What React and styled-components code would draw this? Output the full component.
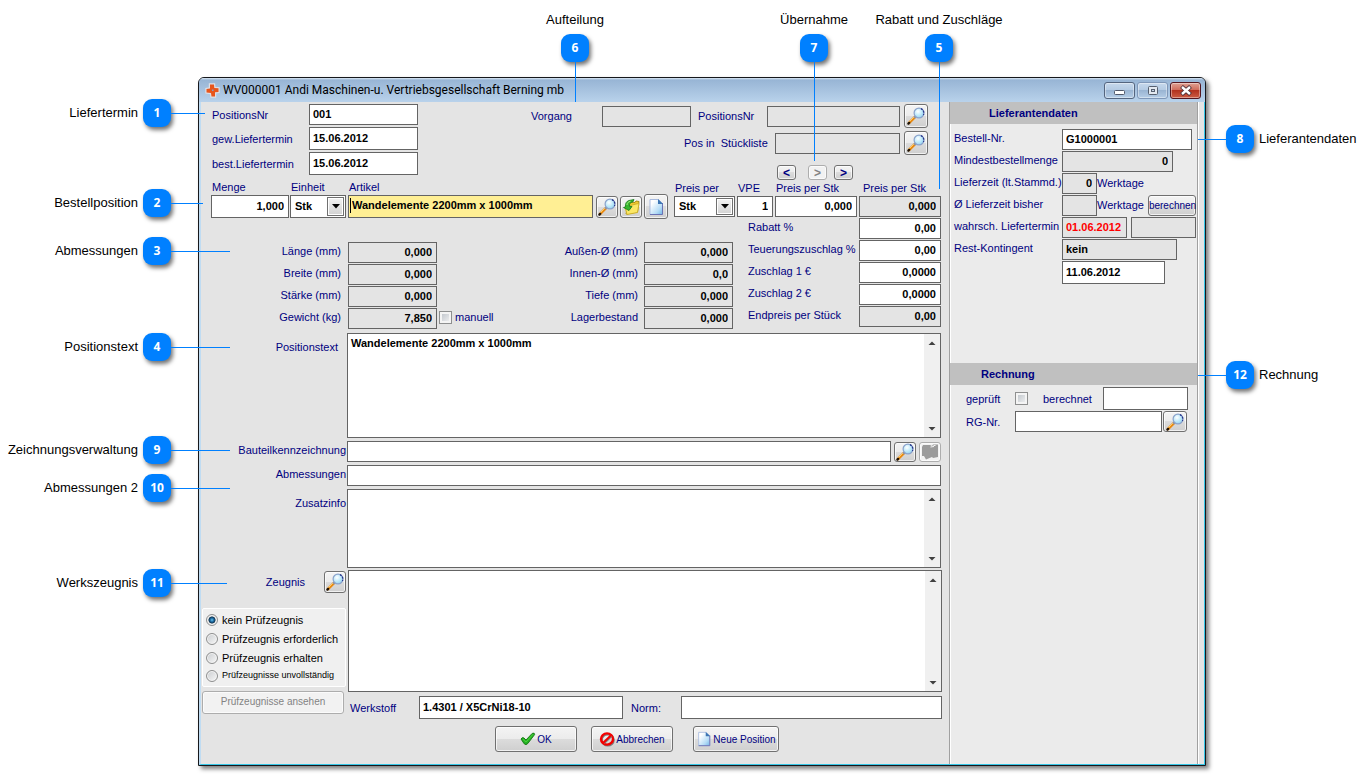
import React, { useId } from 'react';
import styled, { createGlobalStyle, css } from 'styled-components';

const GlobalStyle = createGlobalStyle`
  * {
    box-sizing: border-box;
  }

  body {
    margin: 0;
    background: #fff;
    font-family: "Liberation Sans", Arial, sans-serif;
    font-size: 11px;
    color: #000;
  }

  input, select, textarea, button {
    font-family: inherit;
  }
`;

const callouts = [
  { no: 1, text: 'Liefertermin', side: 'left', at: 113, line: 34 },
  { no: 2, text: 'Bestellposition', side: 'left', at: 203, line: 32 },
  { no: 3, text: 'Abmessungen', side: 'left', at: 251, line: 59 },
  { no: 4, text: 'Positionstext', side: 'left', at: 347, line: 59 },
  { no: 9, text: 'Zeichnungsverwaltung', side: 'left', at: 450, line: 59 },
  { no: 10, text: 'Abmessungen 2', side: 'left', at: 488, line: 59 },
  { no: 11, text: 'Werkszeugnis', side: 'left', at: 583, line: 56 },
  { no: 6, text: 'Aufteilung', side: 'top', at: 575, line: 40 },
  { no: 7, text: 'Übernahme', side: 'top', at: 814, line: 99 },
  { no: 5, text: 'Rabatt und Zuschläge', side: 'top', at: 939, line: 127 },
  { no: 8, text: 'Lieferantendaten', side: 'right', at: 139, line: 28 },
  { no: 12, text: 'Rechnung', side: 'right', at: 375, line: 28 },
];

const MagnifierIcon = () => {
  const id = useId();
  return (
    <svg width="18" height="18" viewBox="0 0 18 18" aria-hidden="true">
      <defs>
        <radialGradient id={id} cx="0.4" cy="0.35" r="0.7">
          <stop offset="0" stopColor="#ffffff" />
          <stop offset="0.5" stopColor="#c4ecfb" />
          <stop offset="1" stopColor="#8fd0f0" />
        </radialGradient>
      </defs>
      <path d="M2 16 L8 10" stroke="#e98a12" strokeWidth="2.6" strokeLinecap="round" />
      <path d="M2.5 14.5 L7 10" stroke="#ffcf6b" strokeWidth="1" />
      <path d="M1.4 16.6 L2.2 15.8" stroke="#1c1208" strokeWidth="2.2" strokeLinecap="round" />
      <path d="M7.2 10.8 L8.8 9.2" stroke="#8b94a8" strokeWidth="2.2" />
      <circle cx="12" cy="6" r="4.9" fill={`url(#${id})`} stroke="#8ba3cc" strokeWidth="1.2" />
      <path d="M14 1.6 A4.9 4.9 0 0 1 16.4 8" fill="none" stroke="#27358c" strokeWidth="1.2" strokeDasharray="2 1" />
    </svg>
  );
};

const PageIcon = ({ size = 18 }) => {
  const id = useId();
  return (
    <svg width={size} height={size} viewBox="0 0 18 18" aria-hidden="true">
      <defs>
        <linearGradient id={id} x1="0" y1="0" x2="1" y2="1">
          <stop offset="0.2" stopColor="#ffffff" />
          <stop offset="0.7" stopColor="#b5dcf6" />
          <stop offset="1" stopColor="#6fb4e6" />
        </linearGradient>
      </defs>
      <path d="M3 1.5 H11.5 L15.5 5.5 V16.5 H3 Z" fill={`url(#${id})`} stroke="#a9bbdf" />
      <path d="M15.5 5 V16.5 H3" fill="none" stroke="#6a72b4" />
      <path d="M11 1 L16 6 H11 Z" fill="#3d76b4" />
    </svg>
  );
};

const FolderIcon = () => (
  <svg width="18" height="18" viewBox="0 0 18 18" aria-hidden="true">
    <path d="M7 4 L13 4.5 L14 3 L17 3.5 L15.5 14 L4 16 Z" fill="#f3c92c" stroke="#a88a14" />
    <path d="M3 9 L14 6 L17 5.5 L15.5 14.5 L5 16.5 Z" fill="#fbe766" stroke="#cdb02a" />
    <path d="M7 2.5 L12 1.5 L11 3.8 C8 4.5 7 6 7.5 8.5 L10 8.5 L7 12.5 L1.5 9.5 L3.5 8.8 C3 5.5 4.5 3.2 7 2.5 Z" fill="#35b72e" stroke="#15761a" strokeWidth="0.8" />
    <path d="M5 7 C5 5 6.2 3.8 8.5 3.2" fill="none" stroke="#a7ec82" />
  </svg>
);

const GreyFolderIcon = () => (
  <svg width="18" height="16" viewBox="0 0 18 16" aria-hidden="true">
    <path d="M2 1 H9 L11 2 L12 0.5 H17 V13 L12 14 L11 13 L5 15.5 L3 12 H1 V3 Z" fill="#9b9b9b" />
    <path d="M9.5 3 L13 2.5 M12.5 1.5 H14.5" stroke="#f4f4f4" />
  </svg>
);

const CheckIcon = () => (
  <svg width="16" height="14" viewBox="0 0 16 14" aria-hidden="true">
    <path d="M1 7 Q2.5 4.8 4 6 L6 8 L12.2 1.4 Q14.8 0.4 14.6 2.6 L7.8 11.5 Q6 13.6 4.2 11.8 Z" fill="#24b324" stroke="#12740f" strokeWidth="0.9" />
    <path d="M3 7.3 L6 10 L13 2.3" fill="none" stroke="#4fd03c" />
  </svg>
);

const ForbiddenIcon = () => (
  <svg width="16" height="16" viewBox="0 0 16 16" aria-hidden="true">
    <ellipse cx="8.8" cy="9" rx="6" ry="5.5" fill="none" stroke="#7d7d7d" strokeWidth="2" />
    <ellipse cx="8" cy="8" rx="6" ry="5.6" fill="none" stroke="#f40000" strokeWidth="2.4" />
    <path d="M5.2 12.4 L12.6 5.4" stroke="#7d7d7d" strokeWidth="1.5" />
    <path d="M4 12 L12 4.2" stroke="#f40000" strokeWidth="2" />
  </svg>
);

const AppIcon = () => (
  <svg width="15" height="15" viewBox="0 0 15 15" aria-hidden="true">
    <path d="M5 1.5 H9 L9.3 5 L13.5 5.3 V9 L10 9.3 V13.5 H6.5 L6 10 L1.5 9.5 V6 L5 5.5 Z" fill="#e8561c" stroke="#dfdfe4" strokeWidth="2.4" />
    <path d="M5 1.5 H9 L9.3 5 L13.5 5.3 V9 L10 9.3 V13.5 H6.5 L6 10 L1.5 9.5 V6 L5 5.5 Z" fill="#e8561c" />
    <rect x="7" y="6.5" width="1.5" height="1.5" fill="#7fa3cf" />
  </svg>
);

const MinimizeIcon = () => (
  <svg width="12" height="11" viewBox="0 0 12 11" aria-hidden="true">
    <rect x="0.5" y="5.5" width="10" height="4" rx="1" fill="#fff" stroke="#50586a" />
  </svg>
);

const MaximizeIcon = () => (
  <svg width="12" height="11" viewBox="0 0 12 11" aria-hidden="true">
    <rect x="1.5" y="1.5" width="9" height="8" rx="1" fill="#e3e9f0" stroke="#566070" />
    <rect x="4.5" y="4.5" width="3" height="2" fill="#c5d4e5" stroke="#566070" />
  </svg>
);

const CloseIcon = () => (
  <svg width="12" height="11" viewBox="0 0 12 11" aria-hidden="true">
    <path d="M1.5 1.5 L10.5 9.5 M10.5 1.5 L1.5 9.5" stroke="#4b2f38" strokeWidth="4.2" />
    <path d="M2 2 L10 9 M10 2 L2 9" stroke="#fff" strokeWidth="2.4" />
  </svg>
);

const Callout = ({ no, text, side, at, line }) => (
  <Pin $side={side} $at={at}>
    <span>{text}</span>
    <Badge>{no}</Badge>
    <Pointer $side={side} $length={line} />
  </Pin>
);

const Lookup = ({ label, $w = 22, $h = 22 }) => (
  <IconButton type="button" aria-label={label} $w={$w} $h={$h}>
    <MagnifierIcon />
  </IconButton>
);

const Combo = ({ id, height }) => (
  <ComboBox $h={height}>
    <Select id={id} defaultValue="Stk">
      <option>Stk</option>
    </Select>
    <ComboArrow>
      <svg width="8" height="5" viewBox="0 0 8 5" aria-hidden="true">
        <path d="M0 0 H8 L4 4.5 Z" fill="#000" />
      </svg>
    </ComboArrow>
  </ComboBox>
);

const Memo = ({ id, height, value }) => (
  <MemoBox $h={height}>
    <TextArea id={id} defaultValue={value} />
    <ScrollTrack>
      <ScrollButton type="button" aria-label="nach oben">
        <svg width="8" height="4" viewBox="0 0 8 4" aria-hidden="true">
          <path d="M0.5 4 L4 0.5 L7.5 4 Z" fill="#404040" />
        </svg>
      </ScrollButton>
      <ScrollButton type="button" aria-label="nach unten">
        <svg width="8" height="4" viewBox="0 0 8 4" aria-hidden="true">
          <path d="M0.5 0 L4 3.5 L7.5 0 Z" fill="#404040" />
        </svg>
      </ScrollButton>
    </ScrollTrack>
  </MemoBox>
);

const HeaderSection = () => (
  <Top>
    <Dates>
      <Label htmlFor="posnr">PositionsNr</Label>
      <Field id="posnr" defaultValue="001" />
      <Label htmlFor="gew">gew.Liefertermin</Label>
      <Field id="gew" $h={23} defaultValue="15.06.2012" />
      <Label htmlFor="best">best.Liefertermin</Label>
      <Field id="best" $h={23} defaultValue="15.06.2012" />
    </Dates>
    <Split>
      <SplitRow>
        <Label htmlFor="vorgang" $w={71}>Vorgang</Label>
        <Field id="vorgang" $w={89} $grey readOnly />
        <SplitLabel htmlFor="splitpos" $w={69}>PositionsNr</SplitLabel>
        <Field id="splitpos" $w={133} $grey readOnly />
        <LookupSlot>
          <Lookup label="Position suchen" $w={24} $h={24} />
        </LookupSlot>
      </SplitRow>
      <SplitRow>
        <PreLabel htmlFor="stueckliste" $w={91}>{'Pos in  Stückliste'}</PreLabel>
        <Field id="stueckliste" $w={125} $grey readOnly />
        <LookupSlot>
          <Lookup label="Stückliste suchen" $w={24} $h={24} />
        </LookupSlot>
      </SplitRow>
      <Arrows>
        <ArrowButton type="button">&lt;</ArrowButton>
        <ArrowPair>
          <ArrowButton type="button" disabled>&gt;</ArrowButton>
          <ArrowButton type="button">&gt;</ArrowButton>
        </ArrowPair>
      </Arrows>
    </Split>
  </Top>
);

const ArticleSection = () => (
  <Article>
    <Cell $w={78}>
      <Label htmlFor="menge">Menge</Label>
      <Field id="menge" $h={23} $right defaultValue="1,000" />
    </Cell>
    <Cell $w={56}>
      <Label htmlFor="einheit">Einheit</Label>
      <Combo id="einheit" height={23} />
    </Cell>
    <Cell $grow>
      <Label htmlFor="artikel">Artikel</Label>
      <ActiveField id="artikel" $h={23} defaultValue="Wandelemente 2200mm x 1000mm" />
    </Cell>
    <ArticleTools>
      <Lookup label="Artikel suchen" />
      <IconButton type="button" aria-label="Artikel übernehmen"><FolderIcon /></IconButton>
      <IconButton type="button" aria-label="Neuer Artikel" $w={24} $h={25}><PageIcon /></IconButton>
    </ArticleTools>
    <Prices>
      <Cell $w={61}>
        <Label htmlFor="preisper">Preis per</Label>
        <Combo id="preisper" height={21} />
      </Cell>
      <Cell $w={36}>
        <Label htmlFor="vpe">VPE</Label>
        <Field id="vpe" $right defaultValue="1" />
      </Cell>
      <Cell $w={82}>
        <Label htmlFor="preis">Preis per Stk</Label>
        <Field id="preis" $right defaultValue="0,000" />
      </Cell>
      <Cell $w={82}>
        <PriceLabel htmlFor="preis2">Preis per Stk</PriceLabel>
        <Field id="preis2" $right $grey readOnly defaultValue="0,000" />
      </Cell>
    </Prices>
  </Article>
);

const dimensions = [
  ['laenge', 'Länge (mm)', '0,000'],
  ['breite', 'Breite (mm)', '0,000'],
  ['staerke', 'Stärke (mm)', '0,000'],
  ['gewicht', 'Gewicht (kg)', '7,850'],
];

const diameters = [
  ['aussen', 'Außen-Ø (mm)', '0,000'],
  ['innen', 'Innen-Ø (mm)', '0,0'],
  ['tiefe', 'Tiefe (mm)', '0,000'],
  ['lager', 'Lagerbestand', '0,000'],
];

const surcharges = [
  ['rabatt', 'Rabatt %', '0,00'],
  ['teuerung', 'Teuerungszuschlag %', '0,00'],
  ['zuschlag1', 'Zuschlag 1 €', '0,0000'],
  ['zuschlag2', 'Zuschlag 2 €', '0,0000'],
  ['endpreis', 'Endpreis per Stück', '0,00'],
];

const DetailSection = () => (
  <Details>
    <Measures>
      <MeasureGrid $label={140} $gap={7}>
        {dimensions.map(([id, label, value]) => (
          <React.Fragment key={id}>
            <RightLabel htmlFor={id}>{label}</RightLabel>
            <Field id={id} $right $grey readOnly defaultValue={value} />
          </React.Fragment>
        ))}
      </MeasureGrid>
      <Manual>
        <CheckBox id="manuell" type="checkbox" />
        <Label htmlFor="manuell">manuell</Label>
      </Manual>
      <MeasureGrid $label={90} $gap={6}>
        {diameters.map(([id, label, value]) => (
          <React.Fragment key={id}>
            <RightLabel htmlFor={id}>{label}</RightLabel>
            <Field id={id} $right $grey readOnly defaultValue={value} />
          </React.Fragment>
        ))}
      </MeasureGrid>
    </Measures>
    <Surcharges>
      {surcharges.map(([id, label, value]) => (
        <React.Fragment key={id}>
          <Label htmlFor={id}>{label}</Label>
          <Field id={id} $right $grey={id === 'endpreis'} defaultValue={value} />
        </React.Fragment>
      ))}
    </Surcharges>
  </Details>
);

const TextSection = () => (
  <TextRows>
    <PositionLabel htmlFor="postext">Positionstext</PositionLabel>
    <Memo id="postext" height={105} value="Wandelemente 2200mm x 1000mm" />
    <RightLabel htmlFor="bauteil">Bauteilkennzeichnung</RightLabel>
    <FieldLine>
      <Field id="bauteil" $grow />
      <Lookup label="Zeichnung suchen" $h={20} />
      <IconButton type="button" aria-label="Zeichnung öffnen" $h={20} disabled>
        <GreyFolderIcon />
      </IconButton>
    </FieldLine>
    <RightLabel htmlFor="abm">Abmessungen</RightLabel>
    <Field id="abm" />
    <MemoLabel htmlFor="zusatz">Zusatzinfo</MemoLabel>
    <Memo id="zusatz" height={79} />
  </TextRows>
);

const certificates = [
  ['kein', 'kein Prüfzeugnis'],
  ['erforderlich', 'Prüfzeugnis erforderlich'],
  ['erhalten', 'Prüfzeugnis erhalten'],
  ['unvollstaendig', 'Prüfzeugnisse unvollständig'],
];

const CertificateSection = () => (
  <Certificate>
    <Aside>
      <CertificateHead>
        <Label htmlFor="zeugnis">Zeugnis</Label>
        <Lookup label="Zeugnis suchen" />
      </CertificateHead>
      <RadioPanel>
        {certificates.map(([id, label], i) => (
          <RadioLabel key={id} $small={i === 3}>
            <Radio type="radio" name="pruefzeugnis" defaultChecked={i === 0} />
            {label}
          </RadioLabel>
        ))}
      </RadioPanel>
      <ShowButton type="button" disabled>Prüfzeugnisse ansehen</ShowButton>
    </Aside>
    <CertificateMain>
      <Memo id="zeugnis" height={122} />
      <MaterialRow>
        <Label htmlFor="werkstoff" $w={69}>Werkstoff</Label>
        <Field id="werkstoff" $h={23} $w={204} defaultValue="1.4301 / X5CrNi18-10" />
        <NormLabel htmlFor="norm" $w={50}>Norm:</NormLabel>
        <Field id="norm" $h={23} $grow />
      </MaterialRow>
      <Actions>
        <ActionButton type="button" $w={82}><CheckIcon />OK</ActionButton>
        <ActionButton type="button" $w={82}><ForbiddenIcon />Abbrechen</ActionButton>
        <NewButton type="button" $w={86}><PageIcon size={16} />Neue Position</NewButton>
      </Actions>
    </CertificateMain>
  </Certificate>
);

const SupplierPanel = () => (
  <Side>
    <PanelTitle>Lieferantendaten</PanelTitle>
    <SupplierRows>
      <Label htmlFor="bestellnr">Bestell-Nr.</Label>
      <SideLine><Field id="bestellnr" $w={130} defaultValue="G1000001" /></SideLine>
      <Label htmlFor="mindest">Mindestbestellmenge</Label>
      <SideLine><Field id="mindest" $w={111} $right $grey readOnly defaultValue="0" /></SideLine>
      <Label htmlFor="lieferzeit">Lieferzeit (lt.Stammd.)</Label>
      <SideLine>
        <Field id="lieferzeit" $w={35} $right $grey readOnly defaultValue="0" />
        <Unit>Werktage</Unit>
      </SideLine>
      <Label htmlFor="bisher">Ø Lieferzeit bisher</Label>
      <SideLine>
        <Field id="bisher" $w={35} $grey readOnly />
        <Unit>Werktage</Unit>
        <CalcButton type="button">berechnen</CalcButton>
      </SideLine>
      <Label htmlFor="wahrsch">wahrsch. Liefertermin</Label>
      <SideLine $gap={4}>
        <Field id="wahrsch" $w={65} $grey $red readOnly defaultValue="01.06.2012" />
        <Field aria-label="Abweichung" $w={65} $grey readOnly />
      </SideLine>
      <Label htmlFor="kontingent">Rest-Kontingent</Label>
      <SideLine><Field id="kontingent" $w={115} $grey readOnly defaultValue="kein" /></SideLine>
      <span />
      <SideLine><Field aria-label="Datum" $w={103} $h={23} defaultValue="11.06.2012" /></SideLine>
    </SupplierRows>
    <InvoiceTitle>Rechnung</InvoiceTitle>
    <InvoiceRows>
      <InvoiceRow>
        <Label htmlFor="geprueft" $w={49}>geprüft</Label>
        <CheckBox id="geprueft" type="checkbox" />
        <BilledLabel htmlFor="berechnet" $w={60}>berechnet</BilledLabel>
        <Field id="berechnet" $h={23} $w={85} />
      </InvoiceRow>
      <InvoiceRow>
        <Label htmlFor="rgnr" $w={49}>RG-Nr.</Label>
        <Field id="rgnr" $w={147} />
        <InvoiceLookup>
          <Lookup label="Rechnung suchen" $w={24} $h={21} />
        </InvoiceLookup>
      </InvoiceRow>
    </InvoiceRows>
  </Side>
);

const App = () => {
  return (
    <>
      <GlobalStyle />
      <Page>
        <Window>
          <TitleBar>
            <AppIcon />
            <Title>WV000001 Andi Maschinen-u. Vertriebsgesellschaft Berning mb</Title>
            <WindowButton type="button" aria-label="Minimieren"><MinimizeIcon /></WindowButton>
            <WindowButton type="button" aria-label="Maximieren" $dim><MaximizeIcon /></WindowButton>
            <WindowButton type="button" aria-label="Schließen" $close><CloseIcon /></WindowButton>
          </TitleBar>
          <Body>
            <Main>
              <HeaderSection />
              <ArticleSection />
              <DetailSection />
              <TextSection />
              <CertificateSection />
            </Main>
            <SupplierPanel />
          </Body>
        </Window>
        {callouts.map((callout) => (
          <Callout key={callout.no} {...callout} />
        ))}
      </Page>
    </>
  );
};

const Page = styled.div`
  position: relative;
  padding: 77px 164px 8px 198px;
`;

const Pin = styled.div`
  position: absolute;
  z-index: 2;
  display: flex;
  align-items: center;
  gap: 5px;
  font-size: 13px;
  line-height: 18px;
  white-space: nowrap;

  ${({ $side, $at }) => $side === 'left' && css`
    left: 0;
    top: ${$at - 14}px;
    width: 171px;
    justify-content: flex-end;
  `}
  ${({ $side, $at }) => $side === 'right' && css`
    right: 0;
    top: ${$at - 14}px;
    width: 144px;
    flex-direction: row-reverse;
    justify-content: flex-end;
  `}
  ${({ $side, $at }) => $side === 'top' && css`
    left: ${$at - 80}px;
    top: 11px;
    width: 160px;
    flex-direction: column;
  `}
`;

const Badge = styled.span`
  width: 28px;
  height: 28px;
  border-radius: 9px;
  background: #0080ff;
  box-shadow: 2px 3px 4px rgba(0, 0, 0, 0.55);
  color: #fff;
  font-family: "Open Sans", sans-serif;
  font-size: 12px;
  font-weight: 700;
  line-height: 28px;
  text-align: center;
`;

const Pointer = styled.span`
  position: absolute;
  background: #0080ff;

  ${({ $side, $length }) => $side === 'top' ? css`
    left: 80px;
    top: 100%;
    width: 1px;
    height: ${$length}px;
  ` : css`
    top: 14px;
    left: ${$side === 'left' ? '171px' : '-28px'};
    width: ${$length}px;
    height: 1px;
  `}
`;

const Window = styled.div`
  border: 1px solid #16181c;
  border-radius: 6px 6px 0 0;
  background: #b9d1ea;
  box-shadow: 3px 3px 4px rgba(0, 0, 0, 0.5);
`;

const TitleBar = styled.div`
  display: flex;
  align-items: center;
  gap: 2px;
  height: 24px;
  padding: 0 4px 0 6px;
  border-radius: 5px 5px 0 0;
  background: linear-gradient(#dbe8f4 0, #98b5d5 2px, #b9d2eb 100%);
`;

const Title = styled.div`
  flex: 1;
  padding-left: 1px;
  font-family: Roboto, "Open Sans", sans-serif;
  font-size: 12px;
  line-height: 18px;
`;

const WindowButton = styled.button`
  display: flex;
  align-items: center;
  justify-content: center;
  width: 31px;
  height: 17px;
  padding: 0;
  border: 1px solid ${({ $close, $dim }) => ($close ? '#54161f' : $dim ? '#7f97b8' : '#54657f')};
  border-radius: 3px;
  background: ${({ $close }) => ($close
    ? 'linear-gradient(#dfa194 0, #cf6a59 48%, #b3321f 50%, #cc5c44 100%)'
    : 'linear-gradient(#c6d8ec 0, #b3cae3 48%, #9ab5d3 50%, #b5cde6 100%)')};
  box-shadow: inset 0 0 0 1px rgba(255, 255, 255, 0.4);
`;

const Body = styled.div`
  display: flex;
  padding-right: 6px;
  border-left: 2px solid #c0dcf2;
  border-right: 1px solid #35c6e6;
  border-bottom: 1px solid #35c6e6;
  background: #e4e4e4;
`;

const Main = styled.div`
  flex: 1;
  min-width: 0;
`;

const Label = styled.label`
  width: ${({ $w }) => ($w ? `${$w}px` : 'auto')};
  flex-shrink: 0;
  color: #000080;
  font-size: 11px;
  line-height: 18px;
  white-space: nowrap;
`;

const RightLabel = styled(Label)`
  text-align: right;
`;

const Field = styled.input`
  width: ${({ $w }) => ($w ? `${$w}px` : '100%')};
  height: ${({ $h }) => $h || 21}px;
  flex: ${({ $grow }) => ($grow ? '1' : 'none')};
  min-width: 0;
  padding: 0 4px 1px 3px;
  border: 1px solid #646464;
  border-radius: 0;
  background: ${({ $grey }) => ($grey ? '#e4e4e4' : '#fff')};
  color: ${({ $red }) => ($red ? '#f00' : '#000')};
  font-size: 11px;
  font-weight: 700;
  text-align: ${({ $right }) => ($right ? 'right' : 'left')};
  outline: none;
`;

const ActiveField = styled(Field)`
  padding-bottom: 3px;
  background: linear-gradient(#000, #000) 1px 2px / 1px 15px no-repeat, #ffef94;
`;

const buttonFace = css`
  border: 1px solid #707070;
  border-radius: 3px;
  background: linear-gradient(#f4f4f4 0, #ececec 48%, #dcdcdc 50%, #cfcfcf 100%);
  box-shadow: inset 0 0 0 1px rgba(255, 255, 255, 0.7);
  color: #000080;

  &:disabled {
    border-color: #adadad;
    background: #f2f2f2;
    color: #838383;
  }
`;

const IconButton = styled.button`
  ${buttonFace}
  display: flex;
  align-items: center;
  justify-content: center;
  flex: none;
  width: ${({ $w }) => $w || 22}px;
  height: ${({ $h }) => $h || 22}px;
  padding: 0;
`;

const Top = styled.div`
  display: flex;
  justify-content: space-between;
  padding: 2px 21px 0 11px;
`;

const Dates = styled.div`
  display: grid;
  grid-template-columns: 97px 109px;
  align-content: start;
  align-items: center;
  row-gap: 2px;
`;

const Split = styled.div`
  display: flex;
  flex-direction: column;
  align-items: flex-end;
  gap: 3px;
`;

const SplitRow = styled.div`
  display: flex;
  align-items: center;
`;

const SplitLabel = styled(Label)`
  margin-left: 7px;
`;

const PreLabel = styled(Label)`
  white-space: pre;
`;

const LookupSlot = styled.div`
  padding-left: 4px;
`;

const Arrows = styled.div`
  display: flex;
  gap: 12px;
  padding: 7px 75px 0 0;
`;

const ArrowPair = styled.div`
  display: flex;
  gap: 7px;
`;

const ArrowButton = styled.button`
  ${buttonFace}
  width: 19px;
  height: 15px;
  padding: 0;
  font-size: 12px;
  font-weight: 700;
  line-height: 12px;
`;

const Article = styled.div`
  display: flex;
  align-items: flex-end;
  gap: 1px;
  padding: 0 8px 0 10px;
`;

const Cell = styled.div`
  display: flex;
  flex-direction: column;
  flex: ${({ $grow }) => ($grow ? '1' : 'none')};
  width: ${({ $w }) => ($w ? `${$w}px` : 'auto')};
  margin-left: ${({ $grow }) => ($grow ? '1px' : '0')};

  ${Label} {
    padding-left: 1px;
    line-height: 15px;
  }
`;

const ArticleTools = styled.div`
  display: flex;
  align-items: center;
  gap: 2px;
  padding: 0 5px 0 2px;
  margin-bottom: -1px;
`;

const Prices = styled.div`
  display: flex;
  gap: 2px;
  padding-bottom: 1px;
`;

const PriceLabel = styled(Label)`
  && {
    padding-left: 4px;
  }
`;

const ComboBox = styled.div`
  position: relative;
  width: 100%;
  height: ${({ $h }) => $h}px;
  border: 1px solid #646464;
  background: #fff;
`;

const Select = styled.select`
  width: 100%;
  height: 100%;
  padding: 0 20px 1px 4px;
  border: 0;
  background: transparent;
  color: #000;
  font-size: 11px;
  font-weight: 700;
  appearance: none;
  outline: none;
`;

const ComboArrow = styled.span`
  position: absolute;
  top: 1px;
  right: 1px;
  bottom: 1px;
  display: flex;
  align-items: center;
  justify-content: center;
  width: 17px;
  border: 1px solid #707070;
  background: linear-gradient(#f2f2f2, #d2d2d2);
  box-shadow: inset 0 0 0 1px #fff;
  pointer-events: none;
`;

const Details = styled.div`
  display: flex;
  justify-content: space-between;
  padding-right: 8px;
`;

const Measures = styled.div`
  display: flex;
  flex: 1;
  justify-content: space-between;
  padding: 24px 15px 0 0;
`;

const MeasureGrid = styled.div`
  display: grid;
  grid-template-columns: ${({ $label }) => $label}px 89px;
  grid-auto-rows: 21px;
  gap: 1px ${({ $gap }) => $gap}px;
`;

const Manual = styled.div`
  display: flex;
  flex: 1;
  align-self: flex-end;
  align-items: center;
  gap: 3px;
  padding: 0 0 3px 2px;
`;

const CheckBox = styled.input`
  width: 13px;
  height: 13px;
  margin: 0;
  flex: none;
  border: 1px solid #8e8f8f;
  background: linear-gradient(135deg, #b9bfc6, #f6f6f6);
  box-shadow: inset 0 0 0 2px #f4f4f4;
  appearance: none;

  &:checked {
    background: #3a6ea5;
  }
`;

const Surcharges = styled.div`
  display: grid;
  grid-template-columns: 111px 82px;
  grid-auto-rows: 21px;
  row-gap: 1px;
`;

const TextRows = styled.div`
  display: grid;
  grid-template-columns: 145px 1fr;
  gap: 3px 1px;
  padding: 4px 8px 0 0;
`;

const PositionLabel = styled(RightLabel)`
  padding: 5px 8px 0 0;
`;

const MemoLabel = styled(RightLabel)`
  padding-top: 5px;
`;

const FieldLine = styled.div`
  display: flex;
  align-items: center;
  gap: 3px;
`;

const MemoBox = styled.div`
  display: flex;
  height: ${({ $h }) => $h}px;
  border: 1px solid #646464;
  background: #fff;
`;

const TextArea = styled.textarea`
  flex: 1;
  padding: 3px;
  border: 0;
  background: transparent;
  font-size: 11px;
  font-weight: 700;
  line-height: 13px;
  resize: none;
  outline: none;
`;

const ScrollTrack = styled.div`
  display: flex;
  flex-direction: column;
  justify-content: space-between;
  width: 16px;
  background: #f0f0f0;
`;

const ScrollButton = styled.button`
  display: flex;
  align-items: center;
  justify-content: center;
  height: 17px;
  padding: 0;
  border: 0;
  background: transparent;
`;

const Certificate = styled.div`
  display: grid;
  grid-template-columns: 147px 1fr;
  padding: 2px 7px 12px 0;
`;

const Aside = styled.div`
  padding: 1px 2px 0 1px;
`;

const CertificateHead = styled.div`
  display: flex;
  align-items: center;
  justify-content: flex-end;
  gap: 19px;
`;

const RadioPanel = styled.div`
  display: flex;
  flex-direction: column;
  gap: 1px;
  height: 79px;
  margin-top: 15px;
  padding: 2px 3px;
  border: 1px solid #fff;
  border-radius: 2px;
  background: #f0f0f0;
`;

const RadioLabel = styled.label`
  display: flex;
  align-items: center;
  gap: 4px;
  font-size: ${({ $small }) => ($small ? '9px' : '11px')};
  line-height: ${({ $small }) => ($small ? '15px' : '18px')};
  white-space: nowrap;
`;

const Radio = styled.input`
  flex: none;
  width: 12px;
  height: 12px;
  margin: 0;
  border: 1px solid #8e8f8f;
  border-radius: 50%;
  background: linear-gradient(135deg, #c9cccf, #f8f8f8);
  box-shadow: inset 0 0 0 1px #f4f4f4;
  appearance: none;

  &:checked {
    background: radial-gradient(circle at 50% 50%, #6cc4ea 0, #1c6ca5 25%, #12344f 45%, #e6e6e6 55%);
  }
`;

const ShowButton = styled.button`
  ${buttonFace}
  width: 142px;
  height: 23px;
  margin-top: 4px;
  padding: 0 0 2px;
  font-size: 10px;
`;

const CertificateMain = styled.div`
  min-width: 0;
`;

const MaterialRow = styled.div`
  display: flex;
  align-items: center;
  padding: 4px 0 0 2px;
`;

const NormLabel = styled(Label)`
  margin-left: 8px;
`;

const Actions = styled.div`
  display: flex;
  gap: 14px;
  padding: 7px 0 0 147px;
`;

const ActionButton = styled.button`
  ${buttonFace}
  display: flex;
  align-items: center;
  justify-content: center;
  gap: 1px;
  width: ${({ $w }) => $w}px;
  height: 26px;
  padding: 0;
  font-size: 10px;
  white-space: nowrap;
`;

const NewButton = styled(ActionButton)`
  margin-left: 6px;
`;

const Side = styled.div`
  width: 249px;
  border: 1px solid #a0a0a0;
  border-width: 0 1px;
  background: #ebebeb;
  box-shadow: inset 1px 0 0 #fff, 1px 0 0 #fff;
`;

const PanelTitle = styled.h2`
  margin: 0;
  padding: 0 0 0 39px;
  background: #c0c0c0;
  color: #000080;
  font-size: 11px;
  line-height: 22px;
`;

const InvoiceTitle = styled(PanelTitle)`
  margin-top: 79px;
  padding-left: 31px;
`;

const SupplierRows = styled.div`
  display: grid;
  grid-template-columns: 108px 1fr;
  row-gap: 1px;
  padding: 5px 0 0 4px;
`;

const SideLine = styled.div`
  display: flex;
  gap: ${({ $gap }) => $gap || 0}px;
`;

const Unit = styled.span`
  color: #000080;
  line-height: 20px;
`;

const CalcButton = styled.button`
  ${buttonFace}
  width: 48px;
  height: 21px;
  margin-left: 4px;
  padding: 0;
  font-size: 10px;
`;

const InvoiceRows = styled.div`
  display: flex;
  flex-direction: column;
  gap: 1px;
  padding: 2px 0 0 16px;
`;

const InvoiceRow = styled.div`
  display: flex;
  align-items: center;
`;

const BilledLabel = styled(Label)`
  margin-left: 15px;
`;

const InvoiceLookup = styled.div`
  padding-left: 1px;
`;

export default App;
